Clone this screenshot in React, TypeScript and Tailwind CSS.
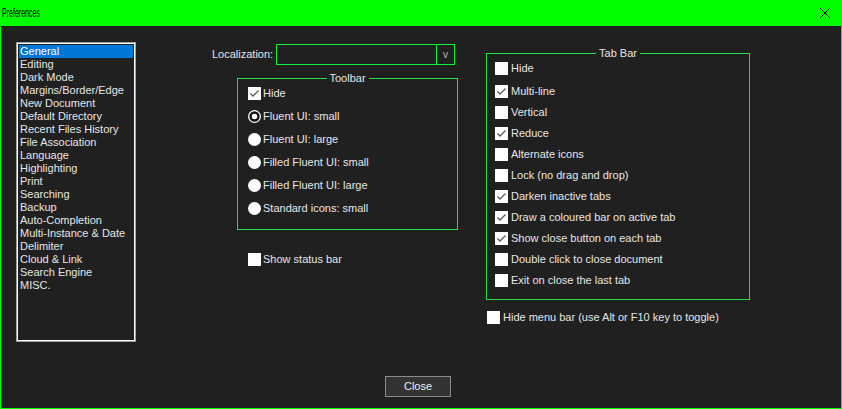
const FONT = "font-['Liberation_Sans',Arial,sans-serif]";

const pages = [
  'General',
  'Editing',
  'Dark Mode',
  'Margins/Border/Edge',
  'New Document',
  'Default Directory',
  'Recent Files History',
  'File Association',
  'Language',
  'Highlighting',
  'Print',
  'Searching',
  'Backup',
  'Auto-Completion',
  'Multi-Instance & Date',
  'Delimiter',
  'Cloud & Link',
  'Search Engine',
  'MISC.',
];

const toolbarOptions = [
  { label: 'Fluent UI: small', selected: true },
  { label: 'Fluent UI: large', selected: false },
  { label: 'Filled Fluent UI: small', selected: false },
  { label: 'Filled Fluent UI: large', selected: false },
  { label: 'Standard icons: small', selected: false },
];

const tabBarOptions = [
  { label: 'Hide', checked: false },
  { label: 'Multi-line', checked: true },
  { label: 'Vertical', checked: false },
  { label: 'Reduce', checked: true },
  { label: 'Alternate icons', checked: false },
  { label: 'Lock (no drag and drop)', checked: false },
  { label: 'Darken inactive tabs', checked: true },
  { label: 'Draw a coloured bar on active tab', checked: true },
  { label: 'Show close button on each tab', checked: true },
  { label: 'Double click to close document', checked: false },
  { label: 'Exit on close the last tab', checked: false },
];

function CheckBox({ checked }: { checked: boolean }) {
  return (
    <span className="w-[13px] h-[13px] bg-white shrink-0 flex items-center justify-center">
      {checked && (
        <svg width="13" height="13" viewBox="0 0 13 13">
          <path d="M2.5 6.5 L5 9 L10.5 3.5" fill="none" stroke="#5a5a5a" strokeWidth="1.3" />
        </svg>
      )}
    </span>
  );
}

function Radio({ selected }: { selected: boolean }) {
  return (
    <svg width="13" height="13" viewBox="0 0 13 13" className="shrink-0">
      <circle cx="6.5" cy="6.5" r="6.5" fill="#fff" />
      {selected && <circle cx="6.5" cy="6.5" r="4" fill="#fff" stroke="#111" strokeWidth="2.4" />}
    </svg>
  );
}

function GroupBox({ title, className, children }: { title: string; className: string; children: React.ReactNode }) {
  return (
    <div className={`relative border border-[#22e046] ${className}`}>
      <span className="absolute -top-[8px] left-1/2 -translate-x-1/2 bg-[#202020] px-[3px] leading-[14px] text-[#e6e6e6] whitespace-nowrap">
        {title}
      </span>
      {children}
    </div>
  );
}

export default function App() {
  return (
    <div className={`${FONT} text-[11px] w-[842px] h-[409px] flex flex-col bg-[#202020] border-x border-b border-[#00ff00] text-[#e6e6e6]`}>
      <div className="h-[26px] bg-[#00ff00] flex items-center justify-between shrink-0">
        <span className="pl-[2px] text-[13px] text-black inline-block scale-x-[0.54] origin-left">Preferences</span>
        <svg width="12" height="12" viewBox="0 0 12 12" className="mr-[10px]">
          <path d="M1 1 L11 11 M11 1 L1 11" stroke="#000" strokeWidth="1" />
        </svg>
      </div>

      <div className="flex-1 flex flex-col">
        <div className="flex pl-[15px] pt-[16px]">
          {/* page list */}
          <div className="w-[120px] h-[300px] border border-[#a0a0a0] shadow-[inset_0_0_0_1px_#ffffff] p-[2px] shrink-0">
            {pages.map((p, i) => (
              <div
                key={p}
                className={`h-[13px] leading-[13px] pl-[1px] whitespace-nowrap ${i === 0 ? 'bg-[#0078d7] text-white' : ''}`}
              >
                {p}
              </div>
            ))}
          </div>

          {/* middle column */}
          <div className="ml-[76px] flex flex-col">
            <div className="mt-[2px] flex items-center">
              <span className="w-[64px]">Localization:</span>
              <div className="w-[179px] h-[21px] border border-[#10f23a] flex">
                <div className="flex-1" />
                <div className="w-[18px] border-l border-[#10f23a] flex items-center justify-center text-[#bdbdbd] text-[10px]">
                  v
                </div>
              </div>
            </div>

            <GroupBox title="Toolbar" className="ml-[25px] mt-[13px] w-[221px] h-[152px] pt-[3px] pl-[10px]">
              <div className="h-[23px] flex items-center gap-[2px]">
                <CheckBox checked={true} />
                <span>Hide</span>
              </div>
              {toolbarOptions.map((o) => (
                <div key={o.label} className="h-[23px] flex items-center gap-[2px]">
                  <Radio selected={o.selected} />
                  <span>{o.label}</span>
                </div>
              ))}
            </GroupBox>

            <div className="ml-[36px] mt-[23px] h-[13px] flex items-center gap-[2px]">
              <CheckBox checked={false} />
              <span>Show status bar</span>
            </div>
          </div>

          {/* right column */}
          <div className="ml-[28px] flex flex-col">
            <GroupBox title="Tab Bar" className="mt-[11px] w-[264px] h-[247px] pt-[4px] pl-[8px]">
              {tabBarOptions.map((o, i) => (
                <div key={o.label} className={`h-[21px] flex items-center gap-[3px] ${i === 0 ? 'mb-[2px]' : ''}`}>
                  <CheckBox checked={o.checked} />
                  <span className="whitespace-nowrap">{o.label}</span>
                </div>
              ))}
            </GroupBox>

            <div className="ml-[1px] mt-[11px] h-[13px] flex items-center gap-[3px]">
              <CheckBox checked={false} />
              <span className="whitespace-nowrap">Hide menu bar (use Alt or F10 key to toggle)</span>
            </div>
          </div>
        </div>

        <div className="flex-1" />
        <div className="pb-[11px] pl-[384px]">
          <button className="w-[66px] h-[21px] bg-[#333333] border border-[#8c8c8c] text-[#eeeeee] flex items-center justify-center">
            Close
          </button>
        </div>
      </div>
    </div>
  );
}
